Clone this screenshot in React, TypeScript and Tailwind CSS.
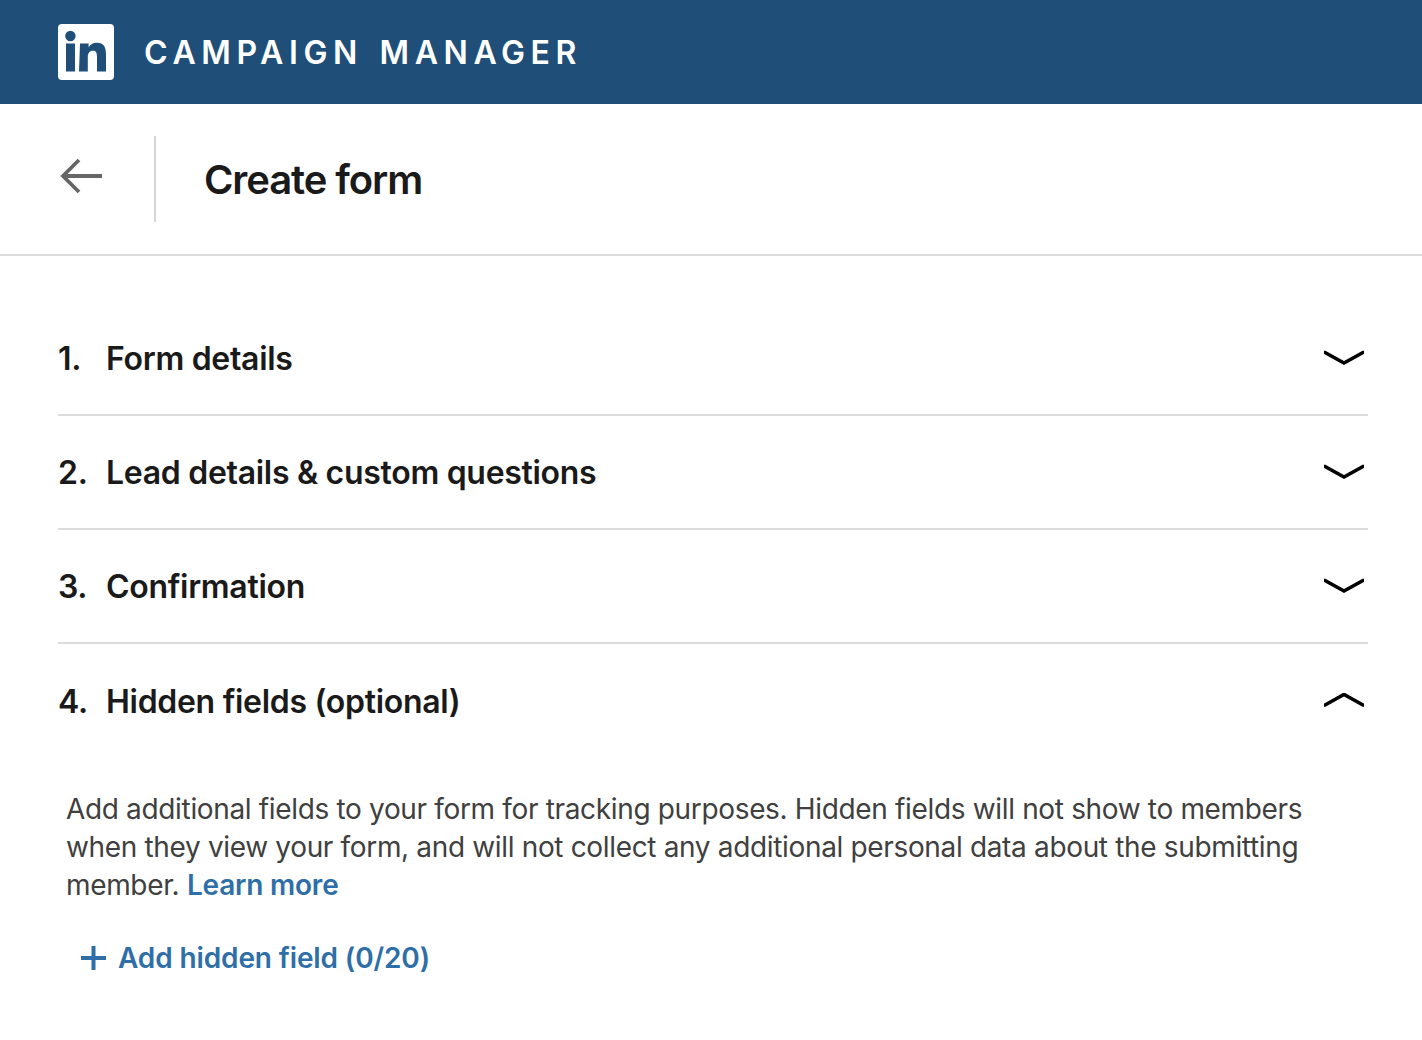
const font = { inter: 'font-["Inter",sans-serif]' }

const sections = [
  { num: '1.', title: 'Form details', open: false },
  { num: '2.', title: 'Lead details & custom questions', open: false },
  { num: '3.', title: 'Confirmation', open: false },
  { num: '4.', title: 'Hidden fields (optional)', open: true },
]

function Caret({ open }: { open: boolean }) {
  return (
    <svg width="40" height="16" viewBox="0 0 40 16" fill="none" className="block">
      <path
        d={open ? 'M1 12 L20 1.500 L39 12' : 'M1 2.5 L20 13 L39 2.5'}
        stroke="#000"
        strokeWidth="3.6"
        strokeLinecap="round"
        strokeLinejoin="miter"
      />
    </svg>
  )
}

export default function App() {
  return (
    <div className={`min-h-[1040px] bg-white ${font.inter} text-[#1a1a1a]`}>
      <header className="flex h-[104px] items-center gap-[31px] bg-[#1f4e79] pl-[58px]">
        <svg width="56" height="56" viewBox="0 0 56 56" className="block">
          <rect width="56" height="56" rx="4" fill="#fff" />
          <circle cx="12.4" cy="12" r="5.2" fill="#1f4e79" />
          <rect x="8" y="19.5" width="9" height="28" fill="#1f4e79" />
          <path
            d="M22 19.5h8.6v3.8c1.5-2.6 4.4-4.5 8.2-4.5 7.4 0 9.2 4.8 9.2 12.2v16.5h-9V33c0-3.6-.6-6.2-4-6.2-3.6 0-5.2 2.6-5.2 6.2v14.500h-8.800z"
            fill="#1f4e79"
          />
        </svg>
        <span className="relative top-[1px] -ml-[1px] text-[32px] leading-none font-semibold tracking-[0.175em] text-white [word-spacing:3px]">
          CAMPAIGN MANAGER
        </span>
      </header>

      <div className="flex h-[152px] items-center border-b-2 border-[#dcdcdc] pl-[58px]">
        <svg width="46" height="38" viewBox="0 0 46 38" fill="none" className="mb-[8px] block">
          <path d="M44 20H6M21 4 5 20l16 16" stroke="#666" strokeWidth="3.8" />
        </svg>
        <div className="mr-[48px] ml-[50px] h-[86px] w-[2px] bg-[#d6d6d6]" />
        <h1 className="pt-[2px] text-[40px] leading-none font-semibold tracking-[-1.1px]">Create form</h1>
      </div>

      <div className="pt-[46px] pr-[54px] pl-[58px]">
        {sections.map((s, i) => (
          <div
            key={s.num}
            className={`flex h-[114px] items-center justify-between pr-[4px] ${i < 3 ? 'border-b-2 border-[#dcdcdc]' : ''}`}
          >
            <div className="flex items-center pt-[2px] text-[32px] font-semibold tracking-[-0.3px]">
              <span className="w-[48px]">{s.num}</span>
              <span>{s.title}</span>
            </div>
            <Caret open={s.open} />
          </div>
        ))}

        <p className="mt-[32px] pl-[8px] text-[28px] leading-[38px] tracking-[-0.34px] text-[#404040]">
          Add additional fields to your form for tracking purposes. Hidden fields will not show to members
          <br />
          when they view your form, and will not collect any additional personal data about the submitting
          <br />
          member. <span className="font-semibold tracking-[-0.2px] text-[#2f6fa8]">Learn more</span>
        </p>

        <div className="mt-[35px] flex items-center pl-[23px] text-[28px] leading-[38px] font-semibold tracking-[-0.12px] text-[#2f6fa8]">
          <svg width="25" height="24" viewBox="0 0 25 24" className="mr-[12px] block">
            <path d="M10.500 0h4v10H25v4H14.500v10h-4V14H0v-4h10.500z" fill="#2f6fa8" />
          </svg>
          Add hidden field (0/20)
        </div>
      </div>
    </div>
  )
}
